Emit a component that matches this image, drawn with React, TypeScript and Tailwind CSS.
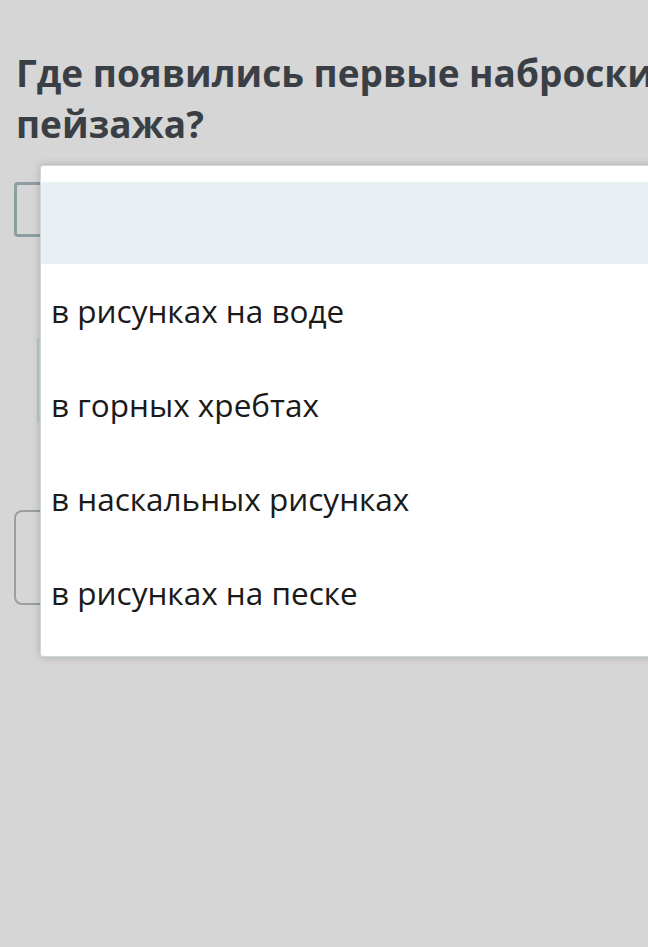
const options = ["в рисунках на воде", "в горных хребтах", "в наскальных рисунках", "в рисунках на песке"];

export default function App() {
  return (
    <div className="relative h-[947px] w-[648px] overflow-hidden bg-[#d6d6d6] font-['Open_Sans',sans-serif]">
      <div className="px-4 pt-[47px]">
        <h1 className="w-[760px] text-[37px] font-bold leading-[51px] text-[#3a3f45]">
          Где появились первые наброски пейзажа?
        </h1>
      </div>

      <div className="relative mt-[33px]">
        <div className="ml-[14px] h-[55px] w-[700px] rounded-[4px] border-[3px] border-[#8d9ea3]" />
        <div className="ml-[37px] mt-[101px] h-[85px] w-[700px] border-l-2 border-[#c0c4c6]" />
        <div className="ml-[14px] mt-[87px] h-[95px] w-[700px] rounded-[8px] border-2 border-[#9c9fa1]" />

        <div className="absolute left-[40px] right-[-40px] top-[-17px] rounded-[3px] border border-[#cdd8dc] bg-white py-4 shadow-[0_0_8px_rgba(0,0,0,0.2)]">
          <div className="h-[82px] bg-[#e9f0f3]" />
          {options.map((text) => (
            <div key={text} className="flex h-[94px] items-center px-[10px] text-[31.5px] text-[#1a1a1a]">
              {text}
            </div>
          ))}
        </div>
      </div>
    </div>
  );
}
